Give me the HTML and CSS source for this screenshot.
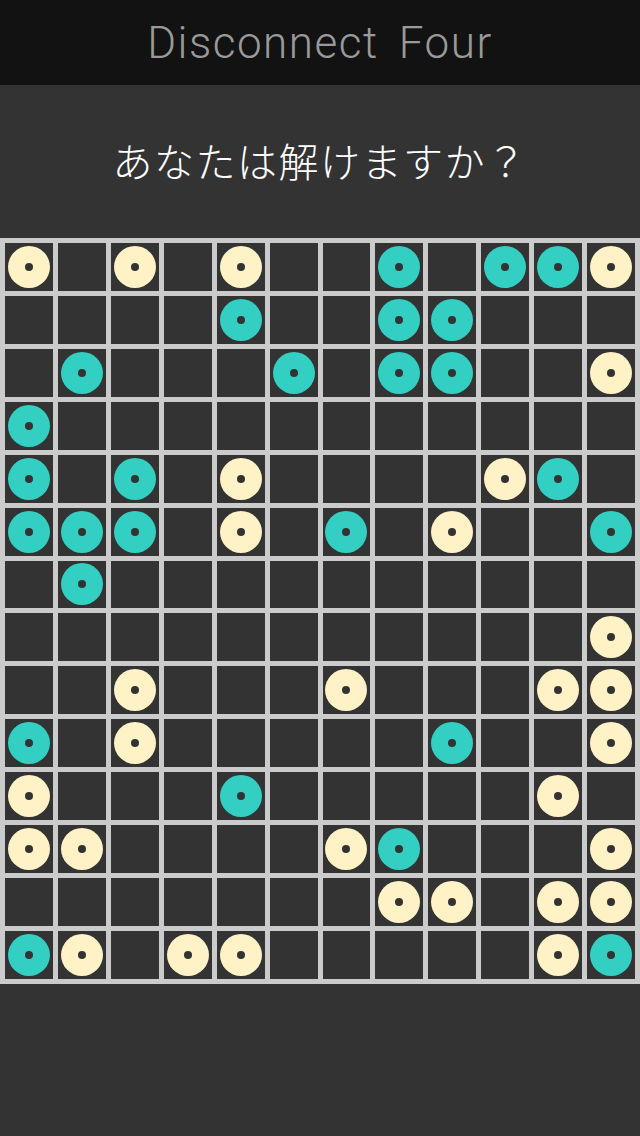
FILE: index.html
```html
<!DOCTYPE html>
<html lang="ja">
<head>
<meta charset="utf-8">
<title>Disconnect Four</title>
<link rel="stylesheet" href="styles.css">
</head>
<body>
<header class="topbar"><h1 class="title">Disconnect Four</h1></header>
<section class="prompt"><p class="question">あなたは解けますか？</p></section>
<div class="board" id="board"></div>
<script>
var rows = [
  "Y.Y.Y..T.TTY",
  "....T..TT...",
  ".T...T.TT..Y",
  "T...........",
  "T.T.Y....YT.",
  "TTT.Y.T.Y..T",
  ".T..........",
  "...........Y",
  "..Y...Y...YY",
  "T.Y.....T..Y",
  "Y...T.....Y.",
  "YY....YT...Y",
  ".......YY.YY",
  "TY.YY.....YT"
];
var board = document.getElementById('board');
rows.forEach(function (r) {
  for (var i = 0; i < r.length; i++) {
    var c = document.createElement('div');
    c.className = 'cell';
    if (r[i] !== '.') {
      var d = document.createElement('span');
      d.className = 'disc ' + (r[i] === 'Y' ? 'cream' : 'teal');
      c.appendChild(d);
    }
    board.appendChild(c);
  }
});
</script>
</body>
</html>
```
FILE: styles.css
```css
html, body {
  margin: 0;
  padding: 0;
}
body {
  background: #333333;
  width: 640px;
  min-height: 1136px;
  font-family: "Noto Sans CJK JP", "Noto Sans", sans-serif;
}
.topbar {
  height: 85px;
  background: #121212;
  display: flex;
  align-items: center;
  justify-content: center;
}
.title {
  margin: 0;
  font-family: Roboto, "Liberation Sans", sans-serif;
  font-weight: 300;
  font-size: 44px;
  line-height: 1;
  color: #9a9a9a;
  letter-spacing: 1.5px;
  word-spacing: 8px;
}
.prompt {
  height: 153px;
  display: flex;
  align-items: center;
  justify-content: center;
}
.question {
  margin: 0 0 4px;
  color: #ffffff;
  font-family: "Noto Sans CJK JP", sans-serif;
  font-weight: 300;
  font-size: 40px;
  line-height: 1;
  letter-spacing: 1.5px;
}
.board {
  background: #cbcbcb;
  padding: 5px;
  display: grid;
  grid-template-columns: repeat(12, 1fr);
  gap: 5px;
}
.cell {
  background: #333333;
  aspect-ratio: 1 / 1;
  display: flex;
  align-items: center;
  justify-content: center;
}
.disc {
  width: 42px;
  height: 42px;
  border-radius: 50%;
  display: flex;
  align-items: center;
  justify-content: center;
}
.disc::after {
  content: "";
  width: 8px;
  height: 8px;
  border-radius: 50%;
  background: #333333;
}
.cream { background: #fff2c6; }
.teal { background: #33cfc3; }
```
